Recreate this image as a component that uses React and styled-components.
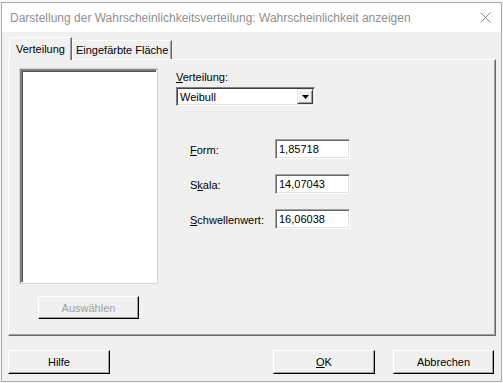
import React from "react";
import styled, { createGlobalStyle } from "styled-components";

const Global = createGlobalStyle`
  html, body { margin: 0; padding: 0; background: #f7f7f7; }
  body { font-family: "Liberation Sans", Arial, sans-serif; font-size: 11px; color: #000; }
  u { text-decoration: underline; text-underline-offset: 1px; }
`;

const Screen = styled.div`
  width: 503px;
  height: 383px;
  padding: 2px 0 0 1px;
  box-sizing: border-box;
  overflow: hidden;
`;

const Window = styled.div`
  width: 501px;
  height: 380px;
  box-sizing: border-box;
  border: 1px solid #aaaaaa;
  background: #f0f0f0;
  display: flex;
  flex-direction: column;
`;

const TitleBar = styled.div`
  height: 29px;
  background: #ffffff;
  display: flex;
  align-items: center;
  justify-content: space-between;
  padding: 0 10px 0 8px;
  flex: none;
`;

const Title = styled.span`
  font-family: "Liberation Sans", Arial, sans-serif;
  font-size: 12px;
  color: #8f8f8f;
`;

const Body = styled.div`
  flex: 1;
  display: flex;
  flex-direction: column;
  padding: 5px 4px 0 6px;
`;

const TabStrip = styled.div`
  display: flex;
  align-items: flex-end;
  height: 22px;
  padding-left: 1px;
  position: relative;
  z-index: 1;
`;

const Tab = styled.div`
  box-sizing: border-box;
  height: ${(p) => (p.$active ? "23px" : "19px")};
  margin-bottom: ${(p) => (p.$active ? "-1px" : "0")};
  padding: ${(p) => (p.$active ? "0 6px 0 6px" : "0 3px 0 3px")};
  display: flex;
  align-items: center;
  background: #f0f0f0;
  border-top: 1px solid #ffffff;
  border-left: 1px solid #ffffff;
  border-right: 1px solid #696969;
  box-shadow: inset -1px 0 0 #a0a0a0;
  font-size: 11px;
  white-space: nowrap;
`;

const Panel = styled.div`
  box-sizing: border-box;
  width: 488px;
  height: 277px;
  border-top: 1px solid #ffffff;
  border-left: 1px solid #ffffff;
  border-right: 1px solid #696969;
  border-bottom: 1px solid #696969;
  box-shadow: inset -1px -1px 0 #a0a0a0;
  display: grid;
  grid-template-columns: 156px 1fr;
  padding: 9px 0 0 11px;
`;

const LeftCol = styled.div`
  display: flex;
  flex-direction: column;
  align-items: flex-start;
`;

const ListBox = styled.div`
  box-sizing: border-box;
  width: 137px;
  height: 214px;
  background: #ffffff;
  border-top: 2px solid #808080;
  border-left: 2px solid #808080;
  border-right: 1px solid #ffffff;
  border-bottom: 1px solid #ffffff;
  box-shadow: inset 1px 1px 0 #505050;
  outline: 1px solid #d4d4d4;
`;

const Button = styled.button`
  box-sizing: border-box;
  width: ${(p) => p.$w || 102}px;
  height: ${(p) => p.$h || 24}px;
  margin-left: ${(p) => p.$ml || 0}px;
  margin-top: ${(p) => p.$mt || 0}px;
  background: #f0f0f0;
  border: none;
  border-top: 1px solid #ffffff;
  border-left: 1px solid #ffffff;
  border-right: 1px solid #000000;
  border-bottom: 1px solid #000000;
  box-shadow: inset -1px -1px 0 #a0a0a0;
  font-family: "Liberation Sans", Arial, sans-serif;
  font-size: 11px;
  color: ${(p) => (p.disabled ? "#a0a0a0" : "#000000")};
  padding: 0;
  display: flex;
  align-items: center;
  justify-content: center;
`;

const RightCol = styled.div`
  display: flex;
  flex-direction: column;
`;

const FieldLabel = styled.div`
  height: 15px;
  padding-top: 2px;
  margin-bottom: 1px;
  line-height: 13px;
`;

const Combo = styled.div`
  box-sizing: border-box;
  width: 139px;
  height: 19px;
  background: #ffffff;
  border-top: 1px solid #808080;
  border-left: 1px solid #808080;
  border-right: 1px solid #ffffff;
  border-bottom: 1px solid #ffffff;
  box-shadow: inset 1px 1px 0 #404040, inset -1px -1px 0 #e3e3e3;
  display: flex;
  align-items: center;
  padding: 0 1px 0 3px;
  justify-content: space-between;
`;

const DropButton = styled.div`
  box-sizing: border-box;
  width: 16px;
  height: 15px;
  background: #f0f0f0;
  border-top: 1px solid #e3e3e3;
  border-left: 1px solid #e3e3e3;
  border-right: 1px solid #404040;
  border-bottom: 1px solid #404040;
  box-shadow: inset 1px 1px 0 #ffffff, inset -1px -1px 0 #a0a0a0;
  display: flex;
  align-items: center;
  justify-content: center;
`;

const Params = styled.div`
  display: flex;
  flex-direction: column;
  gap: 15px;
  margin-top: 33px;
  padding-left: 14px;
`;

const ParamRow = styled.div`
  display: grid;
  grid-template-columns: 85px 75px;
  align-items: center;
  height: 20px;
`;

const ParamLabel = styled.span`
  padding-top: 2px;
`;

const TextInput = styled.div`
  box-sizing: border-box;
  width: 75px;
  height: 20px;
  background: #ffffff;
  border-top: 1px solid #a0a0a0;
  border-left: 1px solid #a0a0a0;
  border-right: 1px solid #ffffff;
  border-bottom: 1px solid #ffffff;
  box-shadow: inset 1px 1px 0 #696969, inset -1px -1px 0 #e3e3e3;
  padding: 0 0 1px 3px;
  display: flex;
  align-items: center;
  font-size: 11px;
`;

const Footer = styled.div`
  display: flex;
  align-items: center;
  padding: 14px 3px 0 0;
`;

const Spacer = styled.div`
  flex: 1;
`;

const params = [
  { pre: "", u: "F", post: "orm:", value: "1,85718" },
  { pre: "S", u: "k", post: "ala:", value: "14,07043" },
  { pre: "", u: "S", post: "chwellenwert:", value: "16,06038" },
];

export default function App() {
  return (
    <>
      <Global />
      <Screen>
        <Window>
          <TitleBar>
            <Title>Darstellung der Wahrscheinlichkeitsverteilung: Wahrscheinlichkeit anzeigen</Title>
            <svg width="11" height="11" viewBox="0 0 11 11">
              <path d="M0.5 0.5 L10.5 10.5 M10.5 0.5 L0.5 10.5" stroke="#8a8a8a" strokeWidth="1" fill="none" />
            </svg>
          </TitleBar>
          <Body>
            <TabStrip>
              <Tab $active>Verteilung</Tab>
              <Tab>Eingefärbte Fläche</Tab>
            </TabStrip>
            <Panel>
              <LeftCol>
                <ListBox />
                <Button disabled $w={101} $h={23} $ml={18} $mt={13}>Auswählen</Button>
              </LeftCol>
              <RightCol>
                <FieldLabel><u>V</u>erteilung:</FieldLabel>
                <Combo>
                  <span>Weibull</span>
                  <DropButton>
                    <svg width="7" height="4" viewBox="0 0 7 4">
                      <path d="M0 0 H7 L3.5 4 Z" fill="#000" />
                    </svg>
                  </DropButton>
                </Combo>
                <Params>
                  {params.map((p) => (
                    <ParamRow key={p.value}>
                      <ParamLabel>{p.pre}<u>{p.u}</u>{p.post}</ParamLabel>
                      <TextInput>{p.value}</TextInput>
                    </ParamRow>
                  ))}
                </Params>
              </RightCol>
            </Panel>
            <Footer>
              <Button $w={102}>Hilfe</Button>
              <Spacer />
              <Button $w={102}><u>O</u>K</Button>
              <Button $w={101} $ml={18}>Abbrechen</Button>
            </Footer>
          </Body>
        </Window>
      </Screen>
    </>
  );
}
